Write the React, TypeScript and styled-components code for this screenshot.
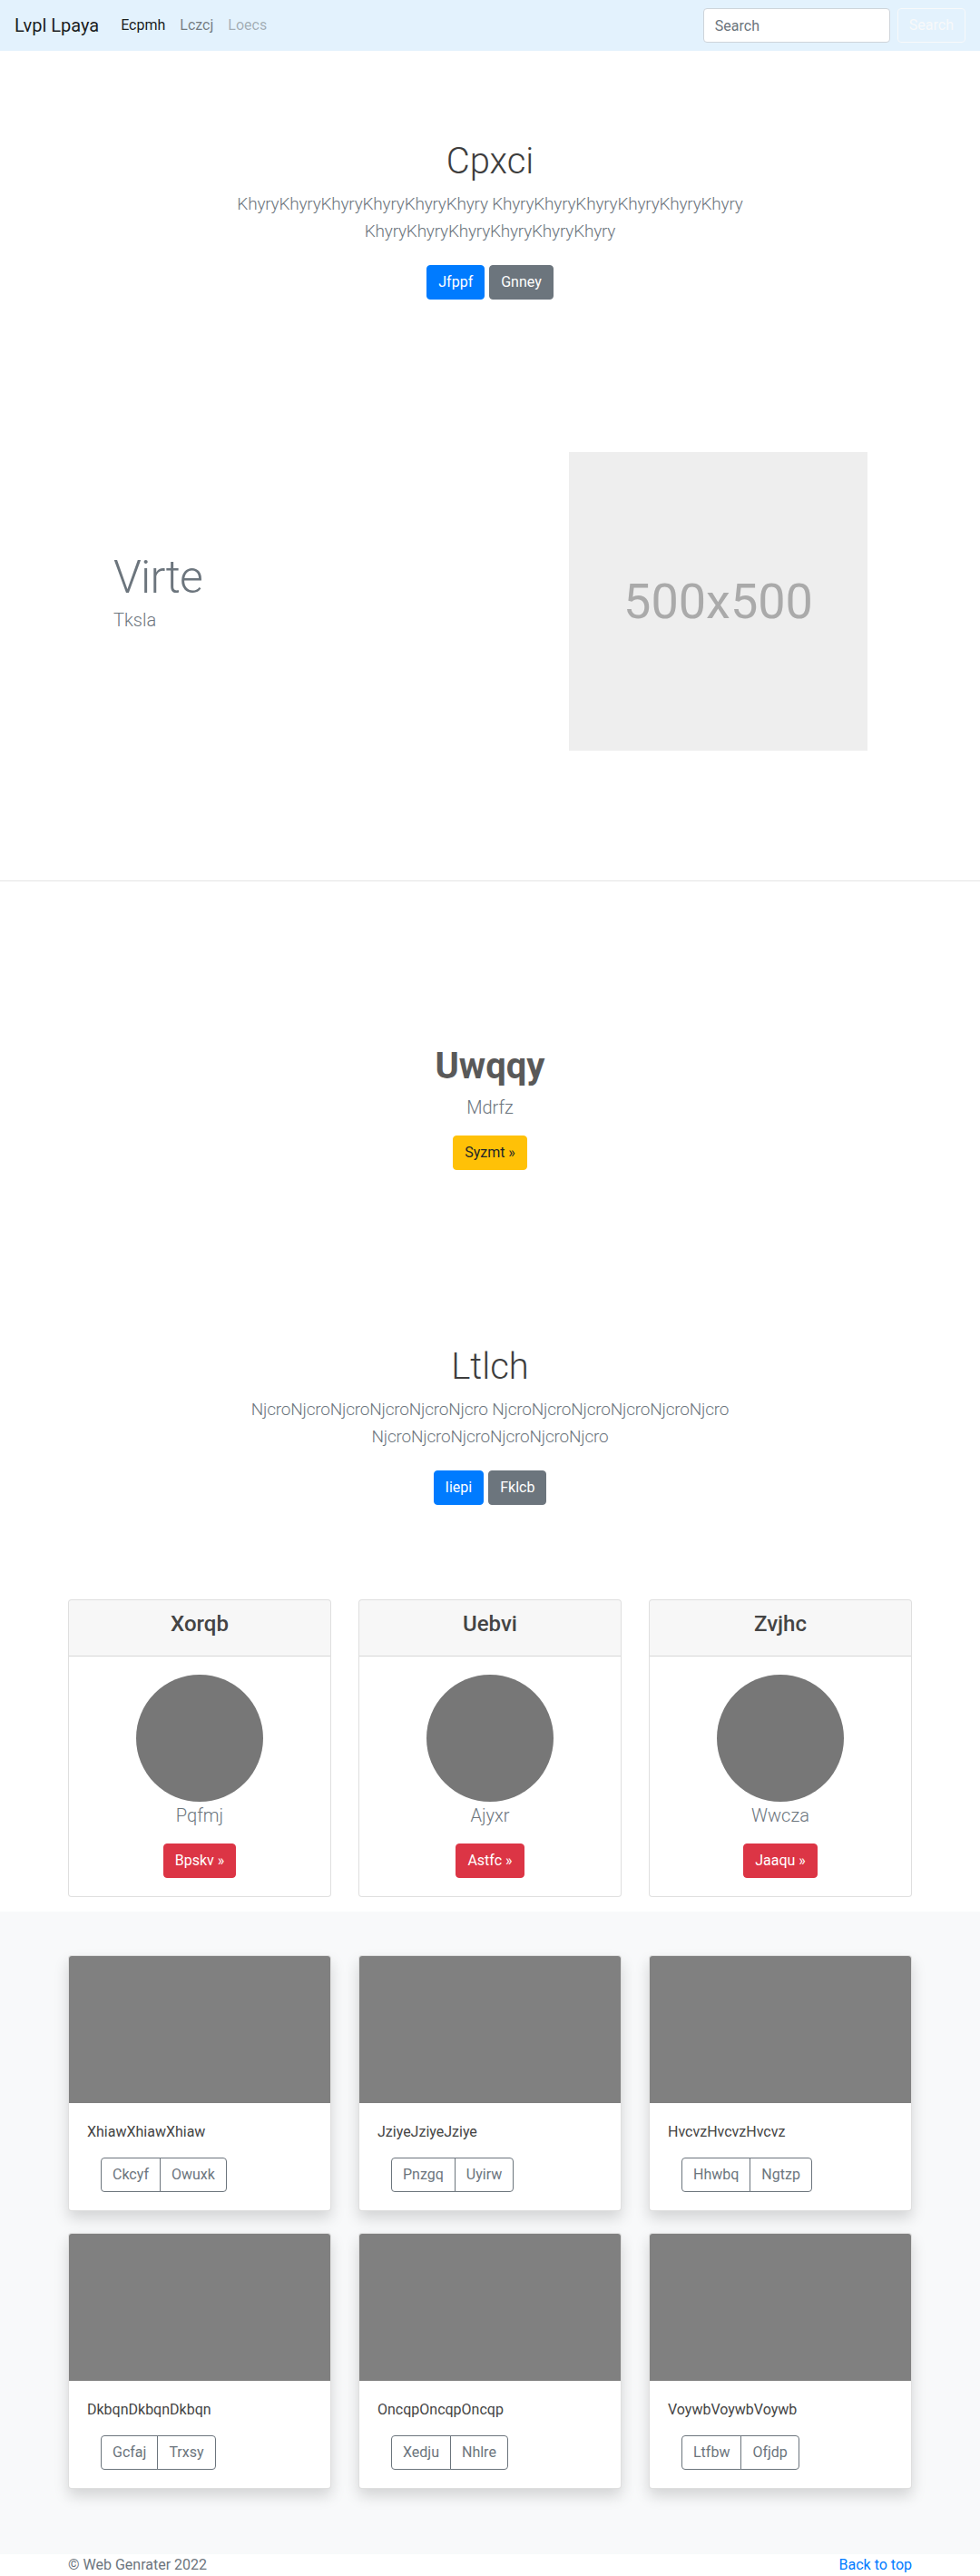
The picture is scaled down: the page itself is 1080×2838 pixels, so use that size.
import React from "react";
import styled, { createGlobalStyle } from "styled-components";

const GlobalStyle = createGlobalStyle`
  *, *::before, *::after { box-sizing: border-box; }
  html, body { margin: 0; padding: 0; }
  body {
    font-family: Roboto, "Liberation Sans", Arial, sans-serif;
    font-size: 16px;
    line-height: 1.5;
    color: #212529;
    background: #fff;
  }
  h1, h2, h3, h4, p { margin: 0; }
`;

type Variant = "primary" | "secondary" | "warning" | "danger" | "outlineLight" | "outlineSecondary";

const palette: Record<Variant, { bg: string; fg: string; border: string }> = {
  primary: { bg: "#007bff", fg: "#fff", border: "#007bff" },
  secondary: { bg: "#6c757d", fg: "#fff", border: "#6c757d" },
  warning: { bg: "#ffc107", fg: "#212529", border: "#ffc107" },
  danger: { bg: "#dc3545", fg: "#fff", border: "#dc3545" },
  outlineLight: { bg: "transparent", fg: "#f8f9fa", border: "#f8f9fa" },
  outlineSecondary: { bg: "transparent", fg: "#6c757d", border: "#6c757d" },
};

const Button = styled.button<{ $variant: Variant }>`
  display: inline-flex;
  align-items: center;
  justify-content: center;
  height: 38px;
  padding: 6px 12px;
  font-family: inherit;
  font-size: 16px;
  font-weight: 400;
  line-height: 24px;
  border-radius: 4px;
  border: 1px solid ${(p) => palette[p.$variant].border};
  background: ${(p) => palette[p.$variant].bg};
  color: ${(p) => palette[p.$variant].fg};
  cursor: pointer;
  white-space: nowrap;
`;

/* ---------- Navbar ---------- */
const Navbar = styled.nav`
  display: flex;
  align-items: center;
  justify-content: space-between;
  height: 56px;
  padding: 8px 16px;
  background: #e3f2fd;
`;

const NavLeft = styled.div`
  display: flex;
  align-items: center;
`;

const Brand = styled.a`
  font-size: 20px;
  line-height: 30px;
  padding: 5px 0;
  margin-right: 16px;
  color: rgba(0, 0, 0, 0.9);
  text-decoration: none;
`;

type Tone = "active" | "normal" | "disabled";
const toneColor: Record<Tone, string> = {
  active: "rgba(0,0,0,0.9)",
  normal: "rgba(0,0,0,0.5)",
  disabled: "rgba(0,0,0,0.3)",
};

const NavLink = styled.a<{ $tone: Tone }>`
  padding: 8px;
  font-size: 16px;
  line-height: 24px;
  text-decoration: none;
  color: ${(p) => toneColor[p.$tone]};
`;

const SearchForm = styled.form`
  display: flex;
  align-items: center;
  gap: 8px;
`;

const SearchInput = styled.input`
  width: 206px;
  height: 38px;
  padding: 6px 12px;
  font-family: inherit;
  font-size: 16px;
  color: #495057;
  background: #fff;
  border: 1px solid #ced4da;
  border-radius: 4px;
  &::placeholder {
    color: #6c757d;
  }
`;

/* ---------- Hero sections ---------- */
const Hero = styled.section<{ $top: number; $bottom?: number }>`
  text-align: center;
  padding-top: ${(p) => p.$top}px;
  padding-bottom: ${(p) => p.$bottom ?? 0}px;
`;

const NarrowContainer = styled.div`
  max-width: 640px;
  margin: 0 auto;
  padding: 0 15px;
`;

const HeroTitle = styled.h1<{ $bold?: boolean; $gap?: number }>`
  font-size: 40px;
  line-height: 48px;
  font-weight: ${(p) => (p.$bold ? 700 : 300)};
  color: ${(p) => (p.$bold ? "#595959" : "#3d3d3d")};
  margin-bottom: ${(p) => p.$gap ?? 8}px;
`;

const Lead = styled.p<{ $tight?: boolean }>`
  font-size: ${(p) => (p.$tight ? 19 : 20)}px;
  letter-spacing: ${(p) => (p.$tight ? "-0.2px" : "normal")};
  line-height: 30px;
  font-weight: 300;
  color: #6c757d;
`;

const ButtonRow = styled.div<{ $top: number }>`
  display: flex;
  justify-content: center;
  gap: 5px;
  margin-top: ${(p) => p.$top}px;
`;

/* ---------- Featurette ---------- */
const Featurette = styled.section`
  max-width: 960px;
  margin: 0 auto;
  padding: 120px 64px 0 65px;
  display: grid;
  grid-template-columns: 1fr 329px;
  align-items: center;
`;

const FeatureHeading = styled.h2`
  font-size: 50px;
  line-height: 1;
  font-weight: 300;
  letter-spacing: -0.8px;
  color: #6c757d;
  margin-bottom: 7px;
`;

const FeatureLead = styled.p`
  font-size: 20px;
  line-height: 30px;
  font-weight: 300;
  color: #6c757d;
  margin-bottom: 16px;
`;

const Placeholder = styled.div`
  width: 329px;
  height: 329px;
  background: #eee;
  color: #aaa;
  font-size: 54px;
  display: flex;
  align-items: center;
  justify-content: center;
`;

const Divider = styled.hr`
  margin: 143px 0 0;
  border: 0;
  border-top: 1px solid rgba(0, 0, 0, 0.1);
  height: 0;
`;

/* ---------- Pricing-like cards ---------- */
const Container = styled.div`
  max-width: 960px;
  margin: 0 auto;
  padding: 0 15px;
`;

const CardDeck = styled.div`
  display: grid;
  grid-template-columns: repeat(3, 1fr);
  gap: 30px;
  padding-top: 104px;
  margin-bottom: 16px;
`;

const ProfileCard = styled.div`
  border: 1px solid rgba(0, 0, 0, 0.125);
  border-radius: 4px;
  background: #fff;
  text-align: center;
  overflow: hidden;
`;

const CardHeader = styled.div`
  background: rgba(0, 0, 0, 0.03);
  border-bottom: 1px solid rgba(0, 0, 0, 0.125);
  padding: 12px 20px;
`;

const CardTitle = styled.h4`
  font-size: 24px;
  line-height: 28.8px;
  font-weight: 500;
  color: #444;
  margin-bottom: 8px;
`;

const ProfileBody = styled.div`
  padding: 20px;
  display: flex;
  flex-direction: column;
  align-items: center;
`;

const Avatar = styled.div`
  width: 140px;
  height: 140px;
  border-radius: 50%;
  background: #777;
`;

const ProfileName = styled.p`
  font-size: 20px;
  line-height: 30px;
  font-weight: 300;
  color: #6c757d;
  margin-bottom: 16px;
`;

/* ---------- Album ---------- */
const Album = styled.section`
  background: #f8f9fa;
  padding: 48px 0;
`;

const AlbumGrid = styled.div`
  display: grid;
  grid-template-columns: repeat(3, 1fr);
  column-gap: 30px;
`;

const AlbumCard = styled.div`
  border: 1px solid rgba(0, 0, 0, 0.125);
  border-radius: 4px;
  background: #fff;
  box-shadow: 0 8px 16px rgba(0, 0, 0, 0.15);
  overflow: hidden;
  margin-bottom: 24px;
`;

const Thumb = styled.div`
  height: 162px;
  background: #808080;
`;

const AlbumBody = styled.div`
  padding: 20px;
`;

const AlbumText = styled.p`
  font-size: 16px;
  line-height: 24px;
  color: #444;
  margin-bottom: 16px;
`;

const BtnGroup = styled.div`
  display: inline-flex;
  margin-left: 15px;
  & > button:first-child {
    border-top-right-radius: 0;
    border-bottom-right-radius: 0;
  }
  & > button + button {
    margin-left: -1px;
    border-top-left-radius: 0;
    border-bottom-left-radius: 0;
  }
`;

/* ---------- Footer ---------- */
const Footer = styled.footer`
  max-width: 960px;
  margin: 0 auto;
  padding: 0 15px;
  display: flex;
  justify-content: space-between;
  line-height: 24px;
  color: #6c757d;
`;

const FooterLink = styled.a`
  color: #007bff;
  text-decoration: none;
`;

const profiles = [
  { title: "Xorqb", name: "Pqfmj", action: "Bpskv »" },
  { title: "Uebvi", name: "Ajyxr", action: "Astfc »" },
  { title: "Zvjhc", name: "Wwcza", action: "Jaaqu »" },
];

const albumItems = [
  { text: "XhiawXhiawXhiaw", a: "Ckcyf", b: "Owuxk" },
  { text: "JziyeJziyeJziye", a: "Pnzgq", b: "Uyirw" },
  { text: "HvcvzHvcvzHvcvz", a: "Hhwbq", b: "Ngtzp" },
  { text: "DkbqnDkbqnDkbqn", a: "Gcfaj", b: "Trxsy" },
  { text: "OncqpOncqpOncqp", a: "Xedju", b: "Nhlre" },
  { text: "VoywbVoywbVoywb", a: "Ltfbw", b: "Ofjdp" },
];

const khyry = "KhyryKhyryKhyryKhyryKhyryKhyry";
const njcro = "NjcroNjcroNjcroNjcroNjcroNjcro";

export default function App() {
  return (
    <>
      <GlobalStyle />
      <Navbar>
        <NavLeft>
          <Brand href="#">Lvpl Lpaya</Brand>
          <NavLink $tone="active" href="#">Ecpmh</NavLink>
          <NavLink $tone="normal" href="#">Lczcj</NavLink>
          <NavLink $tone="disabled" href="#">Loecs</NavLink>
        </NavLeft>
        <SearchForm onSubmit={(e) => e.preventDefault()}>
          <SearchInput type="search" placeholder="Search" aria-label="Search" />
          <Button $variant="outlineLight" type="submit">Search</Button>
        </SearchForm>
      </Navbar>

      <Hero $top={98} $bottom={48}>
        <NarrowContainer>
          <HeroTitle>Cpxci</HeroTitle>
          <Lead $tight>{`${khyry} ${khyry} ${khyry}`}</Lead>
          <ButtonRow $top={22}>
            <Button $variant="primary">Jfppf</Button>
            <Button $variant="secondary">Gnney</Button>
          </ButtonRow>
        </NarrowContainer>
      </Hero>

      <Featurette>
        <div>
          <FeatureHeading>Virte</FeatureHeading>
          <FeatureLead>Tksla</FeatureLead>
        </div>
        <Placeholder>500x500</Placeholder>
      </Featurette>
      <Divider />

      <Hero $top={180}>
        <NarrowContainer>
          <HeroTitle $bold $gap={6}>Uwqqy</HeroTitle>
          <Lead>Mdrfz</Lead>
          <ButtonRow $top={16}>
            <Button $variant="warning">Syzmt »</Button>
          </ButtonRow>
        </NarrowContainer>
      </Hero>

      <Hero $top={193}>
        <NarrowContainer>
          <HeroTitle>Ltlch</HeroTitle>
          <Lead $tight>{`${njcro} ${njcro} ${njcro}`}</Lead>
          <ButtonRow $top={22}>
            <Button $variant="primary">Iiepi</Button>
            <Button $variant="secondary">Fklcb</Button>
          </ButtonRow>
        </NarrowContainer>
      </Hero>

      <Container>
        <CardDeck>
          {profiles.map((p) => (
            <ProfileCard key={p.title}>
              <CardHeader>
                <CardTitle>{p.title}</CardTitle>
              </CardHeader>
              <ProfileBody>
                <Avatar />
                <ProfileName>{p.name}</ProfileName>
                <Button $variant="danger">{p.action}</Button>
              </ProfileBody>
            </ProfileCard>
          ))}
        </CardDeck>
      </Container>

      <Album>
        <Container>
          <AlbumGrid>
            {albumItems.map((it) => (
              <AlbumCard key={it.text}>
                <Thumb />
                <AlbumBody>
                  <AlbumText>{it.text}</AlbumText>
                  <BtnGroup>
                    <Button $variant="outlineSecondary">{it.a}</Button>
                    <Button $variant="outlineSecondary">{it.b}</Button>
                  </BtnGroup>
                </AlbumBody>
              </AlbumCard>
            ))}
          </AlbumGrid>
        </Container>
      </Album>

      <Footer>
        <span>© Web Genrater 2022</span>
        <FooterLink href="#">Back to top</FooterLink>
      </Footer>
    </>
  );
}
